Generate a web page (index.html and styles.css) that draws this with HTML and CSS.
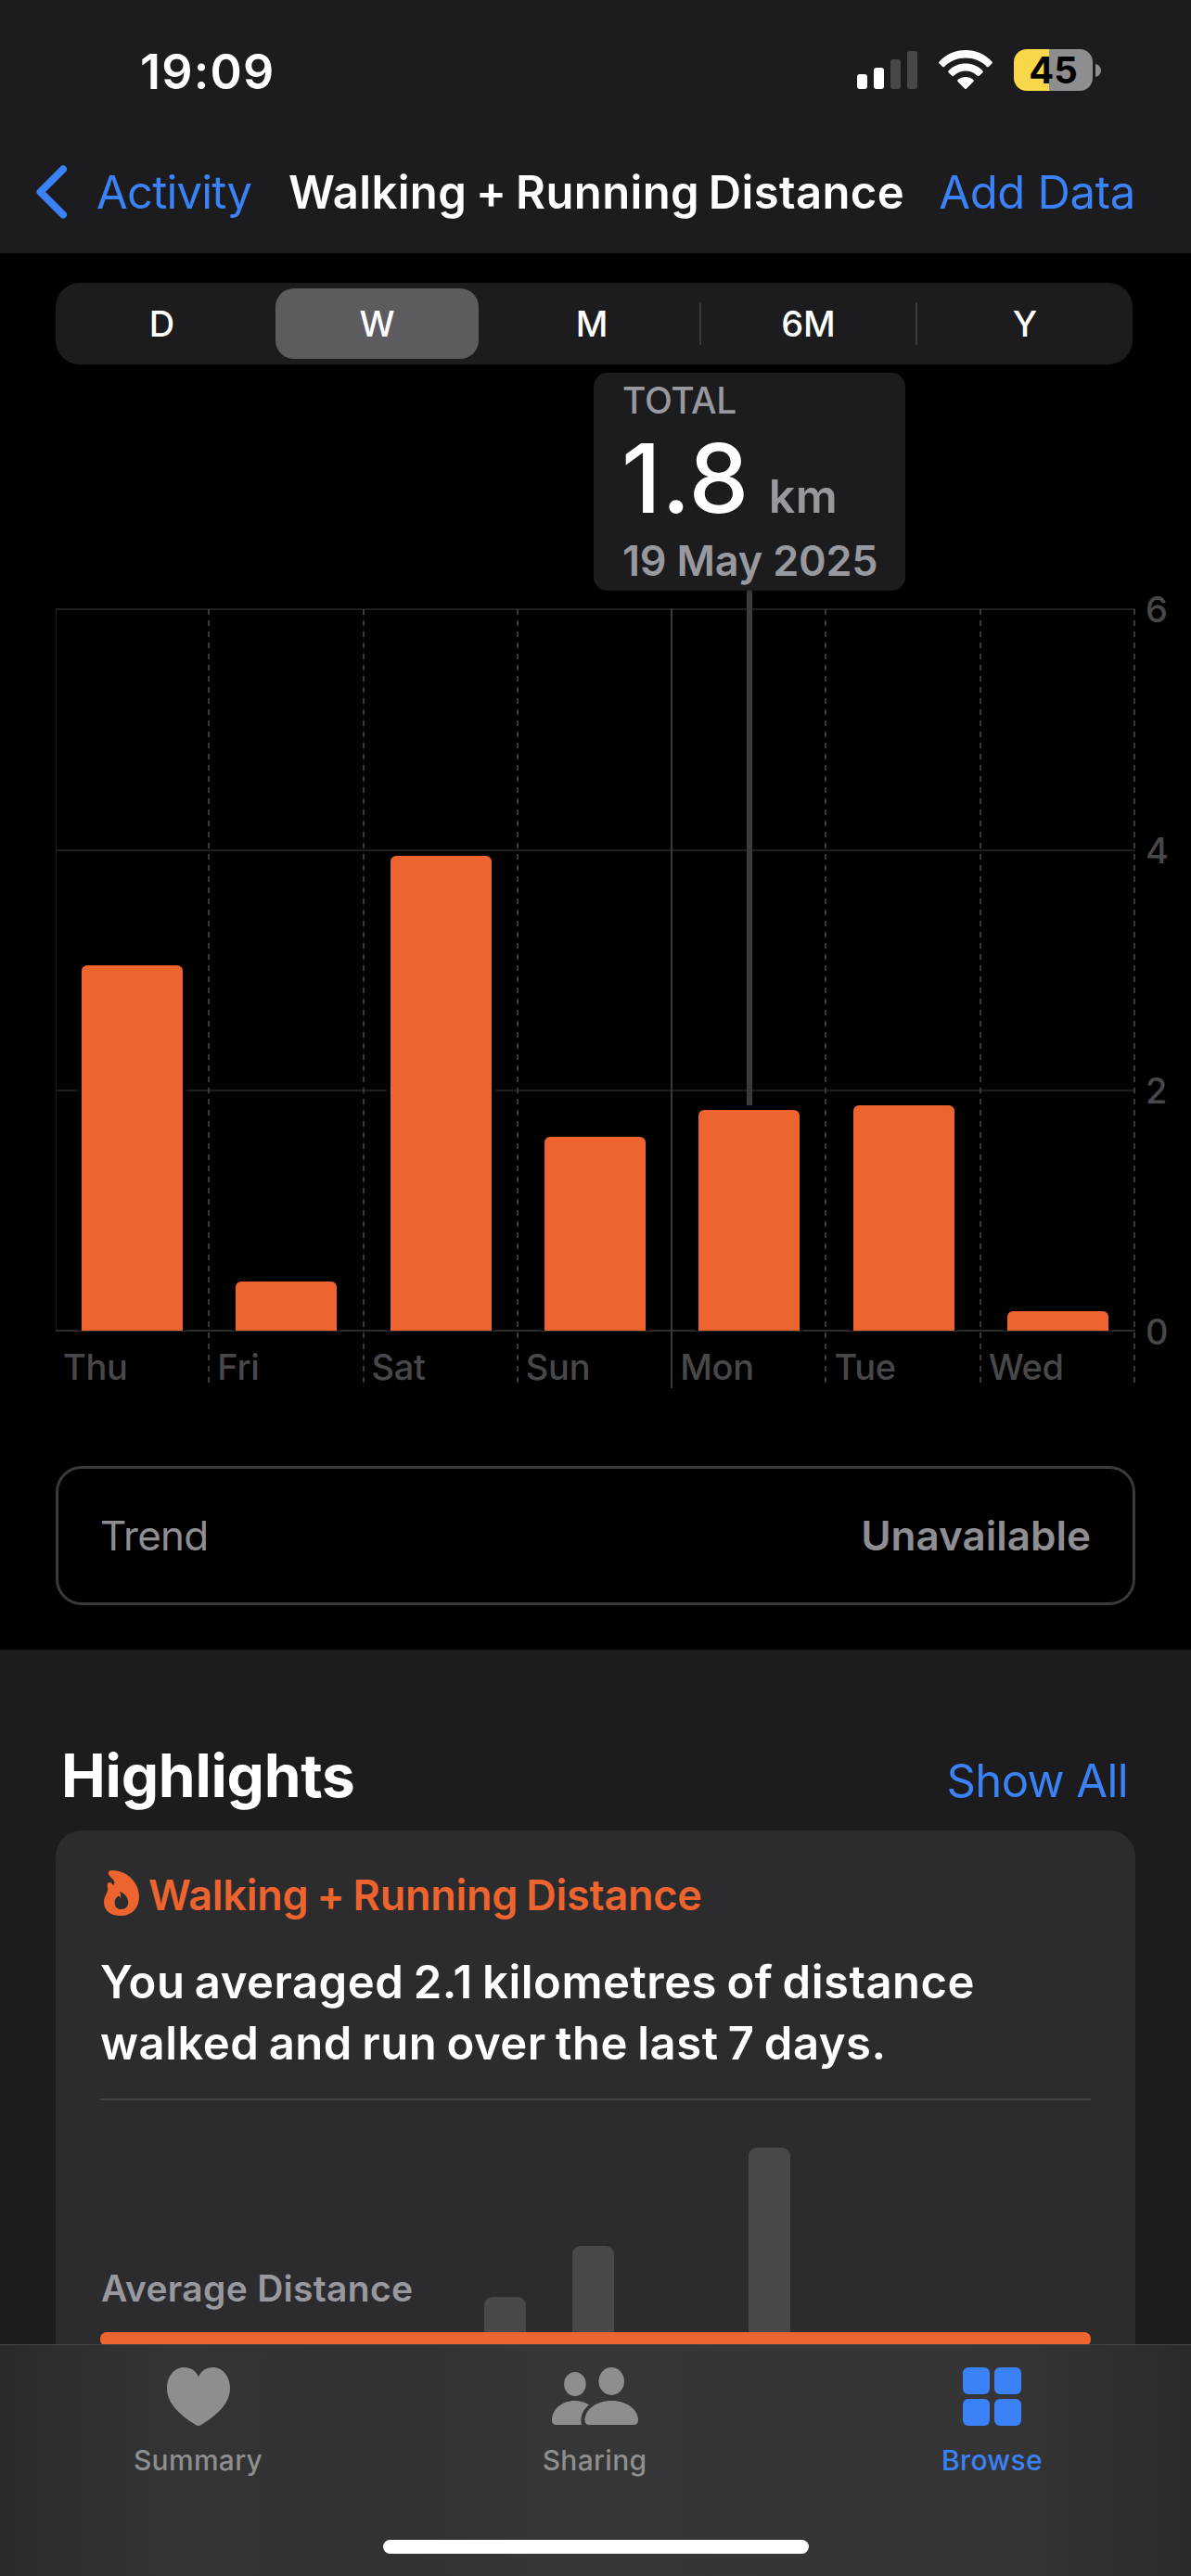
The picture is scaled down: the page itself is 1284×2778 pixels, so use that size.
FILE: index.html
```html
<!DOCTYPE html>
<html lang="en">
<head>
  <meta charset="UTF-8">
  <title>Walking + Running Distance</title>
  <link rel="stylesheet" href="styles.css">
</head>
<body>
  <div class="screen">
    <header class="header">
      <div class="status">
        <div class="time">19:09</div>
        <div class="status-icons">
          <svg width="65" height="45" viewBox="0 0 65 45">
            <rect x="0" y="27" width="11" height="16" rx="3" fill="#fff"/>
            <rect x="18" y="20" width="11" height="23" rx="3" fill="#fff"/>
            <rect x="36" y="11" width="11" height="32" rx="3" fill="#48484a"/>
            <rect x="54" y="2" width="11" height="41" rx="3" fill="#48484a"/>
          </svg>
          <svg width="58" height="45" viewBox="0 0 58 45" fill="#fff">
            <path d="M.6 13.4C16-3 42-3 57.4 13.4q.9 1 0 2l-3.5 3.5q-1 .9-2 0C39.500 6.500 18.500 6.500 6.100 18.900q-1 .9-2 0L.6 15.400q-.9-1 0-2z"/>
            <path d="M10.600 23.300C20.500 13 37.500 13 47.400 23.300q.9 1 0 2l-3.700 3.500q-1 .9-2 0C34.800 21.800 23.200 21.800 16.300 28.800q-1 .9-2 0L10.600 25.300q-.9-1 0-2z"/>
            <path d="M20.600 33.100C25.200 28.800 32.800 28.800 37.400 33.100q.9 1 0 2L30 42.400q-1 1-2 0L20.600 35.100q-.9-1 0-2z"/>
          </svg>
          <div class="battery">
            <div class="battery-body">45</div>
            <svg width="6" height="14" viewBox="0 0 6 14"><path d="M0 0C8 2 8 12 0 14z" fill="#8e8e8e"/></svg>
          </div>
        </div>
      </div>
      <nav class="nav">
        <a class="back">
          <svg width="33" height="58" viewBox="0 0 33 58"><path d="M29 4.500L4.500 29L29 53.500" fill="none" stroke="#3b82f7" stroke-width="8" stroke-linecap="round" stroke-linejoin="round"/></svg>
          <span>Activity</span>
        </a>
        <h1>Walking + Running Distance</h1>
        <a class="add">Add Data</a>
      </nav>
    </header>

    <main class="content">
      <section class="chart-section">
        <div class="segments">
          <div class="segment">D</div>
          <div class="segment active">W</div>
          <div class="segment">M</div>
          <div class="segment divided">6M</div>
          <div class="segment divided">Y</div>
        </div>

        <div class="callout">
          <div class="callout-label">TOTAL</div>
          <div class="callout-value">1.8<span>km</span></div>
          <div class="callout-date">19 May 2025</div>
        </div>

        <div class="chart">
          <div class="days">
            <div class="day"><div class="plot"><div class="bar" style="height: 394px"></div></div><div class="label">Thu</div></div>
            <div class="day"><div class="plot"><div class="bar" style="height: 53px"></div></div><div class="label">Fri</div></div>
            <div class="day"><div class="plot"><div class="bar" style="height: 512px"></div></div><div class="label">Sat</div></div>
            <div class="day week-end"><div class="plot"><div class="bar" style="height: 209px"></div></div><div class="label">Sun</div></div>
            <div class="day selected"><div class="plot"><div class="bar" style="height: 238px"></div></div><div class="label">Mon</div></div>
            <div class="day"><div class="plot"><div class="bar" style="height: 243px"></div></div><div class="label">Tue</div></div>
            <div class="day"><div class="plot"><div class="bar" style="height: 21px"></div></div><div class="label">Wed</div></div>
          </div>
          <div class="axis">
            <span>6</span>
            <span>4</span>
            <span>2</span>
            <span>0</span>
          </div>
        </div>

        <div class="trend">
          <span>Trend</span>
          <strong>Unavailable</strong>
        </div>
      </section>

      <section class="highlights">
        <div class="highlights-header">
          <h2>Highlights</h2>
          <a>Show All</a>
        </div>
        <div class="card">
          <div class="card-title">
            <svg width="38" height="49" viewBox="0 0 38 49" fill="#ed642f" fill-rule="evenodd">
              <path d="M8.500 0C25 0 38 13 38 28.500C38 41 30 49 18 49C7 49 0 43 0 34C0 29 3 25.500 4 22C4.600 19 3 16.500 4.200 14C5.500 12.200 8.300 13 10.300 16.500C12 14 11.500 11 8.500 8.500C6.500 6.500 4.700 4.800 4.700 2.800C4.700 1 6 0 8.500 0ZM17 23C18.200 25.500 18.600 27.500 17.700 30.500C17.400 28.500 16.600 27.500 15.300 28C12.600 29.500 11.700 32 11.700 35C11.700 39.500 14.500 42 18.700 42C23.500 42 26.200 39 26.200 34.500C26.200 29 22.500 25 17 23Z"/>
            </svg>
            <span>Walking + Running Distance</span>
          </div>
          <p class="message">You averaged 2.1 kilometres of distance<br>walked and run over the last 7 days.</p>
          <div class="mini-chart">
            <div class="mini-label">Average Distance</div>
            <div class="mini-bars">
              <div class="mini-bar" style="height: 38px"></div>
              <div class="mini-bar" style="height: 93px"></div>
              <div class="mini-bar" style="height: 0"></div>
              <div class="mini-bar" style="height: 199px"></div>
            </div>
          </div>
          <div class="average-line"></div>
        </div>
      </section>
    </main>

    <footer class="tabbar">
      <div class="tabs">
        <div class="tab">
          <svg width="68" height="63" viewBox="0 0 68 63"><path d="M34 10C31 3.500 25.500 0 18.500 0C8 0 0 9.500 0 22.500C0 38 12.500 50.500 31 62Q34 64 37 62C55.500 50.500 68 38 68 22.500C68 9.500 60 0 49.500 0C42.500 0 37 3.500 34 10Z"/></svg>
          <span>Summary</span>
        </div>
        <div class="tab">
          <svg width="93" height="63" viewBox="0 0 93 63">
            <ellipse cx="24.900" cy="18" rx="11.800" ry="13"/>
            <ellipse cx="64.200" cy="15" rx="13.800" ry="15"/>
            <path d="M4.500 62Q0 62 0 57C0 45 11 36 24.500 36C30.500 36 36 37.500 40 40.500C33 46 30 54 32 62Z"/>
            <path d="M40.500 62Q35.500 62 35.500 57C35.500 46 47 36 64.300 36C81.500 36 93 46 93 57Q93 62 88 62Z"/>
          </svg>
          <span>Sharing</span>
        </div>
        <div class="tab active">
          <svg width="63" height="63" viewBox="0 0 63 63">
            <rect x="0" y="0" width="29" height="29" rx="6"/>
            <rect x="34" y="0" width="29" height="29" rx="6"/>
            <rect x="0" y="34" width="29" height="29" rx="6"/>
            <rect x="34" y="34" width="29" height="29" rx="6"/>
          </svg>
          <span>Browse</span>
        </div>
      </div>
      <div class="home-indicator"></div>
    </footer>
  </div>
</body>
</html>
```
FILE: styles.css
```css
* {
  box-sizing: border-box;
  margin: 0;
  padding: 0;
}

body {
  background-color: #1c1c1e;
  color: #ffffff;
  font-family: Inter, sans-serif;
}

svg {
  display: block;
  flex-shrink: 0;
}

.screen {
  width: 1284px;
  height: 2778px;
  display: flex;
  flex-direction: column;
  overflow: hidden;
}

/* Header */
.header {
  height: 273px;
  flex-shrink: 0;
  background-color: #1c1c1e;
}

.status {
  height: 151px;
  padding: 0 97px 0 151px;
  display: flex;
  align-items: center;
  justify-content: space-between;
}

.time {
  padding-top: 3px;
  font-size: 52px;
  font-weight: 600;
  letter-spacing: 1.2px;
}

.status-icons {
  display: flex;
  align-items: center;
  gap: 23px;
}

.battery {
  display: flex;
  align-items: center;
  gap: 3px;
}

.battery-body {
  width: 85px;
  height: 45px;
  border-radius: 14px;
  background: linear-gradient(to right, #f8d84a 38px, #8e8e8e 38px);
  color: #000000;
  font-size: 40px;
  font-weight: 700;
  line-height: 46px;
  text-align: center;
}

.nav {
  height: 112px;
  padding: 0 60px 0 39px;
  display: flex;
  align-items: center;
  font-size: 49px;
  white-space: nowrap;
}

.nav h1 {
  font-size: 49px;
  font-weight: 600;
  letter-spacing: 0.38px;
  word-spacing: -3px;
}

.nav a {
  color: #3b82f7;
}

.back {
  width: 272px;
  display: flex;
  align-items: center;
  gap: 32px;
  letter-spacing: -0.8px;
}

.add {
  margin-left: auto;
  letter-spacing: -0.3px;
}

.content {
  flex: 1;
  min-height: 0;
  overflow: hidden;
}

/* Chart */
.chart-section {
  height: 1506px;
  padding: 32px 0 0 60px;
  background-color: #000000;
}

.segments {
  width: 1161px;
  height: 88px;
  display: grid;
  grid-template-columns: 229px 233px 232px 233px 1fr;
  align-items: center;
  border-radius: 26px;
  background-color: #1c1c1e;
}

.segment {
  height: 46px;
  font-size: 38px;
  font-weight: 500;
  line-height: 46px;
  text-align: center;
}

.segment.active {
  height: 76px;
  margin: 0 6px 0 8px;
  border-radius: 20px;
  background-color: #5b5b60;
  line-height: 76px;
}

.segment.divided {
  border-left: 2px solid #39393c;
}

.callout {
  width: 336px;
  height: 235px;
  margin: 9px 0 19px 580px;
  padding: 7px 0 0 31px;
  border-radius: 15px;
  background-color: #1c1c1e;
  color: #98989f;
  font-weight: 600;
  white-space: nowrap;
}

.callout-label {
  font-size: 39px;
  font-weight: 500;
  line-height: 46px;
  letter-spacing: -0.4px;
}

.callout-value {
  height: 100px;
  margin: 11px 0 12px -1px;
  color: #ffffff;
  font-size: 103px;
  font-weight: 500;
  line-height: 100px;
  letter-spacing: 0.5px;
}

.callout-value span {
  margin-left: 21px;
  color: #98989f;
  font-size: 50px;
  font-weight: 600;
}

.callout-date {
  font-size: 45px;
  line-height: 54px;
  letter-spacing: -0.2px;
}

.chart {
  display: flex;
}

.days {
  width: 1164px;
  height: 841px;
  display: grid;
  grid-template-columns: repeat(7, 1fr);
  background:
    linear-gradient(#1e1e20, #1e1e20) 0 0 / 100% 2px no-repeat,
    linear-gradient(#1e1e20, #1e1e20) 0 260px / 100% 2px no-repeat,
    linear-gradient(#1e1e20, #1e1e20) 0 519px / 100% 2px no-repeat,
    linear-gradient(#2c2c2e, #2c2c2e) 0 778px / 100% 2px no-repeat,
    linear-gradient(#1c1c1e, #1c1c1e) 0 0 / 1px 780px no-repeat;
}

.day {
  position: relative;
  background: repeating-linear-gradient(to bottom, transparent 0 1px, #3a3a3c 1px 7px, transparent 7px 12px) right top / 2px 100% no-repeat;
}

.day.week-end {
  background: linear-gradient(#3a3a3c, #3a3a3c) right top / 2px 100% no-repeat;
}

/* pointer from the callout down to the selected bar */
.day.selected::before {
  content: "";
  position: absolute;
  top: -19px;
  left: 80px;
  width: 6px;
  height: 555px;
  background-color: #3a3a3c;
}

.plot {
  height: 779px;
  padding-right: 1px;
  display: flex;
  justify-content: center;
  align-items: flex-end;
}

.bar {
  width: 109px;
  border-radius: 6px 6px 0 0;
  background-color: #ed642f;
  box-shadow: 0 0 0 4px #000000;
  clip-path: inset(-4px -4px 0 -4px);
}

.label {
  padding: 16px 0 0 8px;
  color: #48484a;
  font-size: 38px;
  font-weight: 500;
  line-height: 46px;
  letter-spacing: -0.3px;
}

.axis {
  height: 817px;
  margin-top: -18px;
  padding-left: 11px;
  display: flex;
  flex-direction: column;
  justify-content: space-between;
  color: #48484a;
  font-size: 38px;
  font-weight: 500;
  line-height: 38px;
}

.trend {
  width: 1164px;
  height: 150px;
  margin-top: 84px;
  padding: 0 45px;
  display: flex;
  align-items: center;
  justify-content: space-between;
  border: 3px solid #3a3a3c;
  border-radius: 28px;
  color: #8e8e93;
  font-size: 44px;
}

.trend span {
  letter-spacing: -0.8px;
}

.trend strong {
  font-weight: 600;
}

/* Highlights */
.highlights {
  padding: 97px 60px 0;
}

.highlights-header {
  padding: 0 8px 0 6px;
  display: flex;
  align-items: baseline;
  justify-content: space-between;
}

.highlights-header h2 {
  font-size: 64px;
  font-weight: 700;
  line-height: 78px;
  letter-spacing: -0.26px;
}

.highlights-header a {
  color: #3b82f7;
  font-size: 49px;
  letter-spacing: -0.6px;
}

.card {
  height: 700px;
  margin-top: 20px;
  padding: 43px 48px 0;
  border-radius: 28px;
  background-color: #2c2c2e;
}

.card-title {
  height: 54px;
  padding-left: 4px;
  display: flex;
  gap: 10px;
  color: #ed642f;
  font-size: 45px;
  font-weight: 600;
  line-height: 54px;
  letter-spacing: -0.25px;
  word-spacing: -2px;
}

.message {
  margin-top: 34px;
  padding-bottom: 26px;
  border-bottom: 2px solid #414143;
  font-size: 49px;
  font-weight: 600;
  line-height: 66px;
  letter-spacing: 0.5px;
  word-spacing: -2.5px;
  white-space: nowrap;
}

.mini-chart {
  height: 250px;
  display: flex;
  align-items: flex-end;
}

.mini-label {
  width: 414px;
  padding: 0 0 24px 1px;
  color: #98989f;
  font-size: 39px;
  font-weight: 600;
  line-height: 46px;
  letter-spacing: 0.3px;
}

.mini-bars {
  display: flex;
  align-items: flex-end;
  gap: 50px;
}

.mini-bar {
  width: 45px;
  border-radius: 9px 9px 0 0;
  background-color: #48484a;
}

.average-line {
  height: 15px;
  border-radius: 7px;
  background-color: #ed642f;
}

/* Tab bar */
.tabbar {
  height: 250px;
  flex-shrink: 0;
  border-top: 1px solid #444446;
  background: linear-gradient(to right, #2b2b2c, #333435 14%, #323232 34%, #353637 45%, #353536 85%, #2b2b2b);
}

.tabs {
  height: 210px;
  padding-top: 24px;
  display: grid;
  grid-template-columns: 427px 428px 1fr;
}

.tab {
  display: flex;
  flex-direction: column;
  align-items: center;
  gap: 19px;
  color: #8e8e8e;
  fill: #8e8e8e;
  font-size: 30px;
  font-weight: 500;
  line-height: 36px;
  letter-spacing: 0.3px;
}

.tab.active {
  color: #3b82f7;
  fill: #3b82f7;
}

.home-indicator {
  width: 459px;
  height: 15px;
  margin: 0 auto;
  border-radius: 8px;
  background-color: #ffffff;
}
```
